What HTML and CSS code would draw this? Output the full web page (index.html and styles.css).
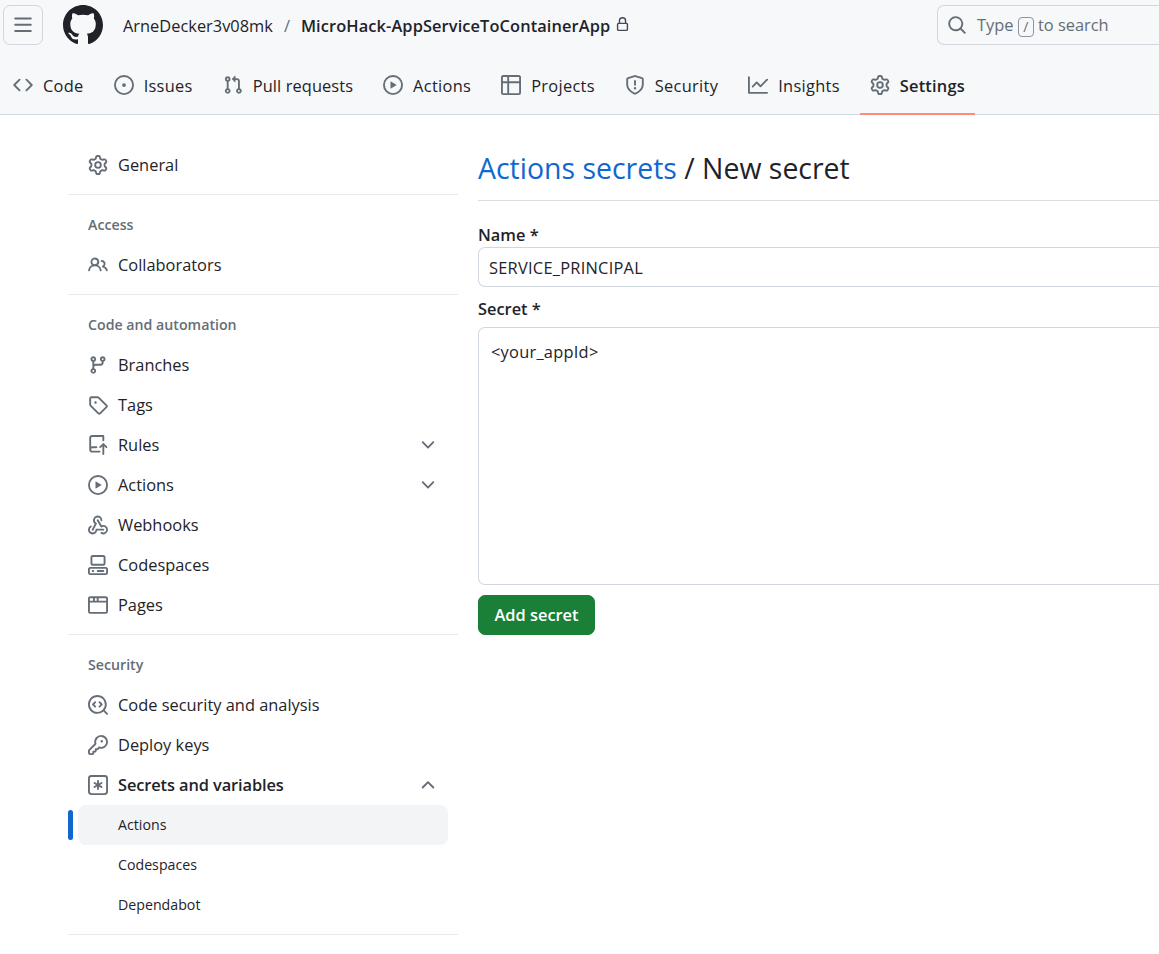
FILE: index.html
```html
<!DOCTYPE html>
<html lang="en">
<head>
<meta charset="utf-8">
<title>Actions secrets / New secret</title>
<link rel="stylesheet" href="styles.css">
</head>
<body>
<svg class="sprite" aria-hidden="true">
  <symbol id="i-gear" viewBox="0 0 16 16"><path fill-rule="evenodd" d="M8 0a8.2 8.2 0 0 1 .701.031C9.444.095 9.99.645 10.16 1.29l.288 1.107c.018.066.079.158.212.224.231.114.454.243.668.386.123.082.233.09.299.071l1.103-.303c.644-.176 1.392.021 1.82.63.27.385.506.792.704 1.218.315.675.111 1.422-.364 1.891l-.814.806c-.049.048-.098.147-.088.294.016.257.016.515 0 .772-.01.147.038.246.088.294l.814.806c.475.469.679 1.216.364 1.891a7.977 7.977 0 0 1-.704 1.217c-.428.61-1.176.807-1.82.63l-1.102-.302c-.067-.019-.177-.011-.3.071a5.909 5.909 0 0 1-.668.386c-.133.066-.194.158-.211.224l-.29 1.106c-.168.646-.715 1.196-1.458 1.26a8.006 8.006 0 0 1-1.402 0c-.743-.064-1.289-.614-1.458-1.26l-.289-1.106c-.018-.066-.079-.158-.212-.224a5.738 5.738 0 0 1-.668-.386c-.123-.082-.233-.09-.299-.071l-1.103.303c-.644.176-1.392-.021-1.82-.63a8.12 8.12 0 0 1-.704-1.218c-.315-.675-.111-1.422.363-1.891l.815-.806c.05-.048.098-.147.088-.294a6.214 6.214 0 0 1 0-.772c.01-.147-.038-.246-.088-.294l-.815-.806C.635 6.045.431 5.298.746 4.623a7.92 7.92 0 0 1 .704-1.217c.428-.61 1.176-.807 1.82-.63l1.102.302c.067.019.177.011.3-.071.214-.143.437-.272.668-.386.133-.066.194-.158.211-.224l.29-1.106C6.009.645 6.556.095 7.299.03 7.53.01 7.764 0 8 0Zm-.571 1.525c-.036.003-.108.036-.137.146l-.289 1.105c-.147.561-.549.967-.998 1.189-.173.086-.34.183-.5.29-.417.278-.97.423-1.529.27l-1.103-.303c-.109-.03-.175.016-.195.045-.22.312-.412.644-.573.99-.014.031-.021.11.059.19l.815.806c.411.406.562.957.53 1.456a4.709 4.709 0 0 0 0 .582c.032.499-.119 1.05-.53 1.456l-.815.806c-.081.08-.073.159-.059.19.162.346.353.677.573.989.02.03.085.076.195.046l1.102-.303c.56-.153 1.113-.008 1.53.27.161.107.328.204.501.29.447.222.85.629.997 1.189l.289 1.105c.029.109.101.143.137.146a6.6 6.6 0 0 0 1.142 0c.036-.003.108-.036.137-.146l.289-1.105c.147-.561.549-.967.998-1.189.173-.086.34-.183.5-.29.417-.278.97-.423 1.529-.27l1.103.303c.109.029.175-.016.195-.045.22-.313.411-.644.573-.99.014-.031.021-.11-.059-.19l-.815-.806c-.411-.406-.562-.957-.53-1.456a4.709 4.709 0 0 0 0-.582c-.032-.499.119-1.05.53-1.456l.815-.806c.081-.08.073-.159.059-.19a6.464 6.464 0 0 0-.573-.989c-.02-.03-.085-.076-.195-.046l-1.102.303c-.56.153-1.113.008-1.53-.27a4.44 4.44 0 0 0-.501-.29c-.447-.222-.85-.629-.997-1.189l-.289-1.105c-.029-.11-.101-.143-.137-.146a6.6 6.6 0 0 0-1.142 0ZM11 8a3 3 0 1 1-6 0 3 3 0 0 1 6 0ZM9.5 8a1.5 1.5 0 1 0-3.001.001A1.5 1.5 0 0 0 9.5 8Z"/></symbol>
  <symbol id="i-code" viewBox="0 0 16 16"><path d="m11.28 3.22 4.25 4.25a.75.75 0 0 1 0 1.06l-4.25 4.25a.749.749 0 0 1-1.275-.326.749.749 0 0 1 .215-.734L13.94 8l-3.72-3.72a.749.749 0 0 1 .326-1.275.749.749 0 0 1 .734.215Zm-6.56 0a.751.751 0 0 1 1.042.018.751.751 0 0 1 .018 1.042L2.06 8l3.72 3.72a.749.749 0 0 1-.326 1.275.749.749 0 0 1-.734-.215L.47 8.53a.75.75 0 0 1 0-1.06Z"/></symbol>
  <symbol id="i-issue" viewBox="0 0 16 16"><path d="M8 9.5a1.5 1.5 0 1 0 0-3 1.5 1.5 0 0 0 0 3Z"/><path fill-rule="evenodd" d="M8 0a8 8 0 1 1 0 16A8 8 0 0 1 8 0ZM1.5 8a6.5 6.5 0 1 0 13 0 6.5 6.5 0 0 0-13 0Z"/></symbol>
  <symbol id="i-pr" viewBox="0 0 16 16"><path fill-rule="evenodd" d="M1.5 3.25a2.25 2.25 0 1 1 3 2.122v5.256a2.251 2.251 0 1 1-1.5 0V5.372A2.25 2.25 0 0 1 1.5 3.25Zm5.677-.177L9.573.677A.25.25 0 0 1 10 .854V2.5h1A2.5 2.5 0 0 1 13.5 5v5.628a2.251 2.251 0 1 1-1.5 0V5a1 1 0 0 0-1-1h-1v1.646a.25.25 0 0 1-.427.177L7.177 3.427a.25.25 0 0 1 0-.354ZM3.75 2.5a.75.75 0 1 0 0 1.5.75.75 0 0 0 0-1.5Zm0 9.5a.75.75 0 1 0 0 1.5.75.75 0 0 0 0-1.5Zm8.25.75a.75.75 0 1 0 1.5 0 .75.75 0 0 0-1.5 0Z"/></symbol>
  <symbol id="i-play" viewBox="0 0 16 16"><path fill-rule="evenodd" d="M8 0a8 8 0 1 1 0 16A8 8 0 0 1 8 0ZM1.5 8a6.5 6.5 0 1 0 13 0 6.5 6.5 0 0 0-13 0Zm4.879-2.773 4.264 2.559a.25.25 0 0 1 0 .428l-4.264 2.559A.25.25 0 0 1 6 10.559V5.442a.25.25 0 0 1 .379-.215Z"/></symbol>
  <symbol id="i-table" viewBox="0 0 16 16"><path fill-rule="evenodd" d="M0 1.75C0 .784.784 0 1.75 0h12.5C15.216 0 16 .784 16 1.75v12.5A1.75 1.75 0 0 1 14.25 16H1.75A1.75 1.75 0 0 1 0 14.25ZM6.5 6.5v8h7.75a.25.25 0 0 0 .25-.25V6.5Zm8-1.5V1.75a.25.25 0 0 0-.25-.25H6.5V5Zm-13 1.5v7.75c0 .138.112.25.25.25H5v-8ZM5 5V1.5H1.75a.25.25 0 0 0-.25.25V5Z"/></symbol>
  <symbol id="i-shield" viewBox="0 0 16 16"><path fill-rule="evenodd" d="M7.467.133a1.748 1.748 0 0 1 1.066 0l5.25 1.68A1.75 1.75 0 0 1 15 3.48V7c0 1.566-.32 3.182-1.303 4.682-.983 1.498-2.585 2.813-5.032 3.855a1.697 1.697 0 0 1-1.33 0c-2.447-1.042-4.049-2.357-5.032-3.855C1.32 10.182 1 8.566 1 7V3.48a1.75 1.75 0 0 1 1.217-1.667Zm.61 1.429a.25.25 0 0 0-.153 0l-5.25 1.68a.25.25 0 0 0-.174.238V7c0 1.358.275 2.666 1.057 3.86.784 1.194 2.121 2.34 4.366 3.297a.196.196 0 0 0 .154 0c2.245-.956 3.582-2.104 4.366-3.298C13.225 9.666 13.5 8.36 13.5 7V3.48a.251.251 0 0 0-.174-.237l-5.25-1.68ZM8.75 4.75v3a.75.75 0 0 1-1.5 0v-3a.75.75 0 0 1 1.5 0ZM9 10.5a1 1 0 1 1-2 0 1 1 0 0 1 2 0Z"/></symbol>
  <symbol id="i-graph" viewBox="0 0 16 16"><path d="M1.5 1.75V13.5h13.75a.75.75 0 0 1 0 1.5H.75a.75.75 0 0 1-.75-.75V1.75a.75.75 0 0 1 1.5 0Zm14.28 2.53-5.25 5.25a.75.75 0 0 1-1.06 0L7 7.06 4.28 9.78a.751.751 0 0 1-1.042-.018.751.751 0 0 1-.018-1.042l3.25-3.25a.75.75 0 0 1 1.06 0L10 7.94l4.72-4.72a.751.751 0 0 1 1.042.018.751.751 0 0 1 .018 1.042Z"/></symbol>
  <symbol id="i-people" viewBox="0 0 16 16"><path fill-rule="evenodd" d="M2 5.5a3.5 3.5 0 1 1 5.898 2.549 5.508 5.508 0 0 1 3.034 4.084.75.75 0 1 1-1.482.235 4 4 0 0 0-7.9 0 .75.75 0 0 1-1.482-.236A5.507 5.507 0 0 1 3.102 8.05 3.493 3.493 0 0 1 2 5.5ZM11 4a3.001 3.001 0 0 1 2.22 5.018 5.01 5.01 0 0 1 2.56 3.012.749.749 0 0 1-.885.954.752.752 0 0 1-.549-.514 3.507 3.507 0 0 0-2.522-2.372.75.75 0 0 1-.574-.73v-.352a.75.75 0 0 1 .416-.672A1.5 1.5 0 0 0 11 5.5.75.75 0 0 1 11 4Zm-5.5-.5a2 2 0 1 0-.001 3.999A2 2 0 0 0 5.5 3.5Z"/></symbol>
  <symbol id="i-branch" viewBox="0 0 16 16"><path fill-rule="evenodd" d="M9.5 3.25a2.25 2.25 0 1 1 3 2.122V6A2.5 2.5 0 0 1 10 8.5H6a1 1 0 0 0-1 1v1.128a2.251 2.251 0 1 1-1.5 0V5.372a2.25 2.25 0 1 1 1.5 0v1.836A2.493 2.493 0 0 1 6 7h4a1 1 0 0 0 1-1v-.628A2.25 2.25 0 0 1 9.5 3.25Zm-6 0a.75.75 0 1 0 1.5 0 .75.75 0 0 0-1.5 0Zm8.25-.75a.75.75 0 1 0 0 1.5.75.75 0 0 0 0-1.5ZM4.25 12a.75.75 0 1 0 0 1.5.75.75 0 0 0 0-1.5Z"/></symbol>
  <symbol id="i-tag" viewBox="0 0 16 16"><path fill-rule="evenodd" d="M1 7.775V2.75C1 1.784 1.784 1 2.75 1h5.025c.464 0 .91.184 1.238.513l6.25 6.25a1.75 1.75 0 0 1 0 2.474l-5.026 5.026a1.75 1.75 0 0 1-2.474 0l-6.25-6.25A1.75 1.75 0 0 1 1 7.775Zm1.5 0c0 .066.026.13.073.177l6.25 6.25a.25.25 0 0 0 .354 0l5.025-5.025a.25.25 0 0 0 0-.354l-6.25-6.25a.25.25 0 0 0-.177-.073H2.75a.25.25 0 0 0-.25.25ZM6 5a1 1 0 1 1 0 2 1 1 0 0 1 0-2Z"/></symbol>
  <symbol id="i-push" viewBox="0 0 16 16"><path d="M1 2.5A2.5 2.5 0 0 1 3.5 0h8.75a.75.75 0 0 1 .75.75v3.5a.75.75 0 0 1-1.5 0V1.5h-8a1 1 0 0 0-1 1v6.708A2.493 2.493 0 0 1 3.5 9h3.25a.75.75 0 0 1 0 1.5H3.5a1 1 0 0 0 0 2h5.75a.75.75 0 0 1 0 1.5H3.5A2.5 2.5 0 0 1 1 11.5Zm13.23 7.79h-.001l-1.224-1.224v6.184a.75.75 0 0 1-1.5 0V9.066L10.28 10.29a.75.75 0 0 1-1.06-1.061l2.505-2.504a.75.75 0 0 1 1.06 0L15.29 9.23a.751.751 0 0 1-.018 1.042.751.751 0 0 1-1.042.018Z"/></symbol>
  <symbol id="i-webhook" viewBox="0 0 16 16"><path d="M5.5 4.25a2.25 2.25 0 0 1 4.5 0 .75.75 0 0 0 1.5 0 3.75 3.75 0 1 0-6.14 2.889l-2.272 4.258a.75.75 0 0 0 1.324.706L7 7.25a.75.75 0 0 0-.309-1.015A2.25 2.25 0 0 1 5.5 4.25Z"/><path d="M7.364 3.607a.75.75 0 0 1 1.03.257l2.608 4.349a3.75 3.75 0 1 1-.628 6.785.75.75 0 0 1 .752-1.299 2.25 2.25 0 1 0-.033-3.88.75.75 0 0 1-1.03-.256L7.107 4.636a.75.75 0 0 1 .257-1.03Z"/><path d="M2.9 8.776A.75.75 0 0 1 2.625 9.8 2.25 2.25 0 1 0 6 11.75a.75.75 0 0 1 .75-.751h5.5a.75.75 0 0 1 0 1.5H7.425a3.751 3.751 0 1 1-5.55-3.998.75.75 0 0 1 1.024.274Z"/></symbol>
  <symbol id="i-codespaces" viewBox="0 0 16 16"><path fill-rule="evenodd" d="M0 11.25c0-.966.784-1.75 1.75-1.75h12.5c.966 0 1.75.784 1.75 1.75v3A1.75 1.75 0 0 1 14.25 16H1.75A1.75 1.75 0 0 1 0 14.25Zm2-9.5C2 .784 2.784 0 3.75 0h8.5C13.216 0 14 .784 14 1.75v5a1.75 1.75 0 0 1-1.75 1.75h-8.5A1.75 1.75 0 0 1 2 6.75Zm1.75-.25a.25.25 0 0 0-.25.25v5c0 .138.112.25.25.25h8.5a.25.25 0 0 0 .25-.25v-5a.25.25 0 0 0-.25-.25Zm-2 9.5a.25.25 0 0 0-.25.25v3c0 .138.112.25.25.25h12.5a.25.25 0 0 0 .25-.25v-3a.25.25 0 0 0-.25-.25Z"/><path d="M7 12.75a.75.75 0 0 1 .75-.75h4.5a.75.75 0 0 1 0 1.5h-4.5a.75.75 0 0 1-.75-.75Zm-4 0a.75.75 0 0 1 .75-.75h.5a.75.75 0 0 1 0 1.5h-.5a.75.75 0 0 1-.75-.75Z"/></symbol>
  <symbol id="i-browser" viewBox="0 0 16 16"><path fill-rule="evenodd" d="M0 2.75C0 1.784.784 1 1.75 1h12.5c.966 0 1.75.784 1.75 1.75v10.5A1.75 1.75 0 0 1 14.25 15H1.75A1.75 1.75 0 0 1 0 13.25ZM14.5 6h-13v7.25c0 .138.112.25.25.25h12.5a.25.25 0 0 0 .25-.25Zm0-1.5V2.75a.25.25 0 0 0-.25-.25H8.5v2ZM7 4.5v-2H5.5v2Zm-3 0v-2H1.75a.25.25 0 0 0-.25.25V4.5Z"/></symbol>
  <symbol id="i-scan" viewBox="0 0 16 16"><path fill-rule="evenodd" d="M0 7.5C0 3.358 3.358 0 7.5 0S15 3.358 15 7.5c0 1.754-.602 3.367-1.61 4.643l2.39 2.387a.749.749 0 0 1-.326 1.275.749.749 0 0 1-.734-.215l-2.39-2.387A7.466 7.466 0 0 1 7.5 15C3.358 15 0 11.642 0 7.5Zm7.5-6a6 6 0 1 0 0 12 6 6 0 0 0 0-12Z"/><path d="M6.28 5.22a.75.75 0 0 1 0 1.06L5.06 7.5l1.22 1.22a.75.75 0 1 1-1.06 1.06L3.47 8.03a.75.75 0 0 1 0-1.06l1.75-1.75a.75.75 0 0 1 1.06 0Zm2.44 0a.75.75 0 0 1 1.06 0l1.75 1.75a.75.75 0 0 1 0 1.06l-1.75 1.75a.75.75 0 1 1-1.06-1.06L9.94 7.5 8.72 6.28a.75.75 0 0 1 0-1.06Z"/></symbol>
  <symbol id="i-key" viewBox="0 0 16 16"><path fill-rule="evenodd" d="M10.5 0a5.499 5.499 0 1 1-1.288 10.848l-.932.932a.749.749 0 0 1-.53.22H7v.75a.749.749 0 0 1-.22.53l-.5.5a.749.749 0 0 1-.53.22H5v.75a.749.749 0 0 1-.22.53l-.5.5a.749.749 0 0 1-.53.22h-2A1.75 1.75 0 0 1 0 14.25v-2c0-.199.079-.389.22-.53l4.932-4.932A5.5 5.5 0 0 1 10.5 0Zm-4 5.5c-.001.431.069.86.205 1.269a.75.75 0 0 1-.181.768L1.5 12.56v1.69c0 .138.112.25.25.25h1.69l.06-.06v-1.19a.75.75 0 0 1 .75-.75h1.19l.06-.06v-1.19a.75.75 0 0 1 .75-.75h1.19l1.023-1.025a.75.75 0 0 1 .768-.18A4 4 0 1 0 6.5 5.5ZM11 6a1 1 0 1 1 0-2 1 1 0 0 1 0 2Z"/></symbol>
  <symbol id="i-asterisk" viewBox="0 0 16 16"><path fill-rule="evenodd" d="M0 2.75A2.75 2.75 0 0 1 2.75 0h10.5A2.75 2.75 0 0 1 16 2.75v10.5A2.75 2.75 0 0 1 13.25 16H2.75A2.75 2.75 0 0 1 0 13.25ZM2.75 1.5c-.69 0-1.25.56-1.25 1.25v10.5c0 .69.56 1.25 1.25 1.25h10.5c.69 0 1.25-.56 1.25-1.25V2.75c0-.69-.56-1.25-1.25-1.25Z"/><path d="M8 4a.75.75 0 0 1 .75.75V6.7l1.69-.975a.75.75 0 0 1 .75 1.3L9.5 8l1.69.976a.75.75 0 0 1-.75 1.298L8.75 9.3v1.951a.75.75 0 0 1-1.5 0V9.299l-1.69.976a.75.75 0 0 1-.75-1.3L6.5 8l-1.69-.975a.75.75 0 0 1 .75-1.3l1.69.976V4.75A.75.75 0 0 1 8 4Z"/></symbol>
  <symbol id="i-down" viewBox="0 0 16 16"><path d="M12.78 5.22a.749.749 0 0 1 0 1.06l-4.25 4.25a.749.749 0 0 1-1.06 0L3.22 6.28a.749.749 0 1 1 1.06-1.06L8 8.939l3.72-3.719a.749.749 0 0 1 1.06 0Z"/></symbol>
  <symbol id="i-up" viewBox="0 0 16 16"><path d="M3.22 10.53a.749.749 0 0 1 0-1.06l4.25-4.25a.749.749 0 0 1 1.06 0l4.25 4.25a.749.749 0 1 1-1.06 1.06L8 6.811 4.28 10.53a.749.749 0 0 1-1.06 0Z"/></symbol>
</svg>

<div class="app">
  <header class="repo-header">
    <div class="topbar">
      <button class="menu-btn" type="button" aria-label="Open menu">
        <svg class="icon" viewBox="0 0 16 16"><path d="M1 2.75A.75.75 0 0 1 1.75 2h12.5a.75.75 0 0 1 0 1.5H1.75A.75.75 0 0 1 1 2.75Zm0 5A.75.75 0 0 1 1.75 7h12.5a.75.75 0 0 1 0 1.5H1.75A.75.75 0 0 1 1 7.75ZM1.75 12h12.5a.75.75 0 0 1 0 1.5H1.75a.75.75 0 0 1 0-1.5Z"/></svg>
      </button>
      <svg class="logo" viewBox="0 0 16 16"><path d="M8 0c4.42 0 8 3.58 8 8a8.013 8.013 0 0 1-5.45 7.59c-.4.08-.55-.17-.55-.38 0-.27.01-1.13.01-2.2 0-.75-.25-1.23-.54-1.48 1.78-.2 3.65-.88 3.65-3.95 0-.88-.31-1.59-.82-2.15.08-.2.36-1.02-.08-2.12 0 0-.67-.22-2.2.82-.64-.18-1.32-.27-2-.27-.68 0-1.36.09-2 .27-1.53-1.03-2.2-.82-2.2-.82-.44 1.1-.16 1.92-.08 2.12-.51.56-.82 1.28-.82 2.15 0 3.06 1.86 3.75 3.64 3.95-.23.2-.44.55-.51 1.07-.46.21-1.61.55-2.33-.66-.15-.24-.6-.83-1.23-.82-.67.01-.27.38.01.53.34.19.73.9.82 1.13.16.45.68 1.31 2.69.94 0 .67.01 1.3.01 1.49 0 .21-.15.45-.55.38A7.995 7.995 0 0 1 0 8c0-4.42 3.58-8 8-8Z"/></svg>
      <nav class="crumbs">
        <a class="crumb-owner">ArneDecker3v08mk</a>
        <span class="crumb-sep">/</span>
        <a class="crumb-repo">MicroHack-AppServiceToContainerApp</a>
        <svg class="icon lock" viewBox="0 0 16 16"><path fill-rule="evenodd" d="M4 4a4 4 0 0 1 8 0v2h.25c.966 0 1.75.784 1.75 1.75v5.5A1.75 1.75 0 0 1 12.25 15h-8.5A1.75 1.75 0 0 1 2 13.25v-5.5C2 6.784 2.784 6 3.75 6H4Zm8.25 3.5h-8.5a.25.25 0 0 0-.25.25v5.5c0 .138.112.25.25.25h8.5a.25.25 0 0 0 .25-.25v-5.5a.25.25 0 0 0-.25-.25ZM10.5 6V4a2.5 2.5 0 1 0-5 0v2Z"/></svg>
      </nav>
      <div class="search">
        <svg class="icon" viewBox="0 0 16 16"><path fill-rule="evenodd" d="M10.68 11.74a6 6 0 0 1-7.922-8.982 6 6 0 0 1 8.982 7.922l3.04 3.04a.749.749 0 0 1-.326 1.275.749.749 0 0 1-.734-.215ZM11.5 7a4.499 4.499 0 1 0-8.997 0A4.499 4.499 0 0 0 11.5 7Z"/></svg>
        <span class="search-text">Type <kbd class="slash">/</kbd> to search</span>
      </div>
    </div>
    <nav class="tabs">
      <a class="tab"><svg class="icon"><use href="#i-code"/></svg>Code</a>
      <a class="tab"><svg class="icon"><use href="#i-issue"/></svg>Issues</a>
      <a class="tab tab-long"><svg class="icon"><use href="#i-pr"/></svg>Pull requests</a>
      <a class="tab"><svg class="icon"><use href="#i-play"/></svg>Actions</a>
      <a class="tab"><svg class="icon"><use href="#i-table"/></svg>Projects</a>
      <a class="tab"><svg class="icon"><use href="#i-shield"/></svg>Security</a>
      <a class="tab"><svg class="icon"><use href="#i-graph"/></svg>Insights</a>
      <a class="tab tab-active"><svg class="icon"><use href="#i-gear"/></svg>Settings</a>
    </nav>
  </header>

  <div class="layout">
    <aside class="sidebar">
      <section class="side-group">
        <a class="side-item"><svg class="icon"><use href="#i-gear"/></svg><span class="side-label">General</span></a>
      </section>
      <section class="side-group">
        <h2 class="side-heading">Access</h2>
        <a class="side-item"><svg class="icon"><use href="#i-people"/></svg><span class="side-label">Collaborators</span></a>
      </section>
      <section class="side-group">
        <h2 class="side-heading">Code and automation</h2>
        <a class="side-item"><svg class="icon"><use href="#i-branch"/></svg><span class="side-label">Branches</span></a>
        <a class="side-item"><svg class="icon"><use href="#i-tag"/></svg><span class="side-label">Tags</span></a>
        <a class="side-item"><svg class="icon"><use href="#i-push"/></svg><span class="side-label">Rules</span><svg class="icon chevron"><use href="#i-down"/></svg></a>
        <a class="side-item"><svg class="icon"><use href="#i-play"/></svg><span class="side-label">Actions</span><svg class="icon chevron"><use href="#i-down"/></svg></a>
        <a class="side-item"><svg class="icon"><use href="#i-webhook"/></svg><span class="side-label">Webhooks</span></a>
        <a class="side-item"><svg class="icon"><use href="#i-codespaces"/></svg><span class="side-label">Codespaces</span></a>
        <a class="side-item"><svg class="icon"><use href="#i-browser"/></svg><span class="side-label">Pages</span></a>
      </section>
      <section class="side-group">
        <h2 class="side-heading">Security</h2>
        <a class="side-item"><svg class="icon"><use href="#i-scan"/></svg><span class="side-label">Code security and analysis</span></a>
        <a class="side-item"><svg class="icon"><use href="#i-key"/></svg><span class="side-label">Deploy keys</span></a>
        <a class="side-item side-open"><svg class="icon"><use href="#i-asterisk"/></svg><span class="side-label">Secrets and variables</span><svg class="icon chevron"><use href="#i-up"/></svg></a>
        <a class="side-sub side-current">Actions</a>
        <a class="side-sub">Codespaces</a>
        <a class="side-sub">Dependabot</a>
      </section>
    </aside>

    <main class="content">
      <h1 class="page-title"><a class="title-link">Actions secrets</a> / New secret</h1>
      <form class="secret-form">
        <label class="field-label" for="secret-name">Name *</label>
        <input class="text-input" id="secret-name" type="text" value="SERVICE_PRINCIPAL">
        <label class="field-label field-label-second" for="secret-value">Secret *</label>
        <textarea class="text-area" id="secret-value">&lt;your_appId&gt;</textarea>
        <button class="add-btn" type="button">Add secret</button>
      </form>
    </main>
  </div>
</div>
</body>
</html>
```

FILE: styles.css
```css
* { box-sizing: border-box; }

html, body {
  margin: 0;
  padding: 0;
  background: #ffffff;
}

body {
  font-family: "Open Sans", "Noto Sans", sans-serif;
  font-size: 16.4px;
  color: #1f2328;
}

.sprite { display: none; }

.app { width: 100%; }

.icon {
  width: 20px;
  height: 20px;
  flex: none;
  fill: #656d76;
}

/* Header */
.repo-header {
  height: 115px;
  padding-top: 5px;
  background: #f6f8fa;
  border-bottom: 1px solid #d0d7de;
}

.topbar {
  display: flex;
  align-items: center;
  height: 40px;
  padding-left: 3px;
}

.menu-btn {
  display: flex;
  align-items: center;
  justify-content: center;
  width: 40px;
  height: 40px;
  padding: 0;
  background: #f6f8fa;
  border: 1px solid #d0d7de;
  border-radius: 7px;
}

.logo {
  width: 40px;
  height: 40px;
  margin-left: 20px;
  fill: #1f2328;
  flex: none;
}

.crumbs {
  display: flex;
  align-items: center;
  margin-left: 20px;
}

.crumb-sep { margin: 0 11px; color: #656d76; }
.crumb-repo { font-weight: 600; letter-spacing: .1px; }

.lock {
  width: 15px;
  height: 15px;
  margin-left: 5px;
  margin-bottom: 2px;
  fill: #424a53;
}

.search {
  display: flex;
  align-items: center;
  gap: 10px;
  width: 222px;
  height: 40px;
  margin-left: auto;
  padding-left: 9px;
  border: 1px solid #d0d7de;
  border-right: 0;
  border-radius: 7px 0 0 7px;
  color: #656d76;
  white-space: nowrap;
}

.slash {
  display: inline-block;
  width: 16px;
  height: 20px;
  font: inherit;
  font-size: 14px;
  line-height: 18px;
  text-align: center;
  vertical-align: -1px;
  border: 1px solid #8c959f;
  border-radius: 4px;
}

.tabs {
  display: flex;
  gap: 10px;
  height: 49px;
  margin-top: 20px;
  padding-left: 3px;
}

.tab {
  position: relative;
  display: flex;
  align-items: center;
  gap: 10px;
  height: 40px;
  padding: 0 10px;
  letter-spacing: .3px;
}

.tab-long { letter-spacing: .1px; }

.tab-active { font-weight: 600; letter-spacing: .2px; }

.tab-active::after {
  content: "";
  position: absolute;
  left: 0;
  right: 0;
  top: 48px;
  height: 2px;
  background: #fd8c73;
}

/* Two-column layout */
.layout {
  display: flex;
  padding: 30px 0 0 68px;
  gap: 20px;
}

.sidebar { width: 390px; flex: none; }

.side-group {
  padding-bottom: 9px;
  margin-bottom: 10px;
  border-bottom: 1px solid #e7eaed;
}

.side-heading {
  display: flex;
  align-items: center;
  height: 40px;
  margin: 0;
  padding: 0 0 2px 20px;
  font-size: 14.2px;
  font-weight: 600;
  color: #656d76;
}

.side-item {
  display: flex;
  align-items: center;
  gap: 10px;
  height: 40px;
  margin: 0 10px;
  padding: 0 10px;
}

.side-label { margin-bottom: 2px; }

.side-open { font-weight: 600; letter-spacing: -.1px; }

.chevron { margin-left: auto; }

.side-sub {
  display: flex;
  align-items: center;
  height: 40px;
  margin: 0 10px;
  padding: 0 0 2px 40px;
  font-size: 14.2px;
  border-radius: 8px;
}

.side-current {
  position: relative;
  background: #f3f4f6;
}

.side-current::before {
  content: "";
  position: absolute;
  left: -10px;
  top: 5px;
  width: 5px;
  height: 30px;
  border-radius: 3px;
  background: #0f67cf;
}

/* Main column */
.content { flex: 1; min-width: 0; }

.page-title {
  margin: 0;
  height: 56px;
  line-height: 46px;
  font-size: 28.45px;
  font-weight: 400;
  border-bottom: 1px solid #d8dee4;
}

.title-link { color: #0f67cf; }

.secret-form {
  display: flex;
  flex-direction: column;
  align-items: flex-start;
}

.field-label {
  display: block;
  height: 26px;
  margin-top: 20px;
  line-height: 27px;
  font-weight: 600;
}

.field-label-second {
  height: 33px;
  margin-top: 7px;
  line-height: 30px;
}

.text-input,
.text-area {
  width: 100%;
  font: inherit;
  letter-spacing: .25px;
  color: #1f2328;
  background: #fff;
  border: 1px solid #d0d7de;
  border-right: 0;
  border-radius: 7px 0 0 7px;
  outline: none;
}

.text-input {
  height: 40px;
  padding: 0 0 0 10px;
}

.text-area {
  display: block;
  height: 258px;
  padding: 12px 0 0 12px;
  resize: none;
}

.add-btn {
  height: 40px;
  width: 117px;
  margin-top: 10px;
  padding: 0 0 2px;
  font: inherit;
  font-weight: 600;
  color: #fff;
  background: #1a7f37;
  border: 1px solid #1a7f37;
  border-radius: 7px;
}
```
